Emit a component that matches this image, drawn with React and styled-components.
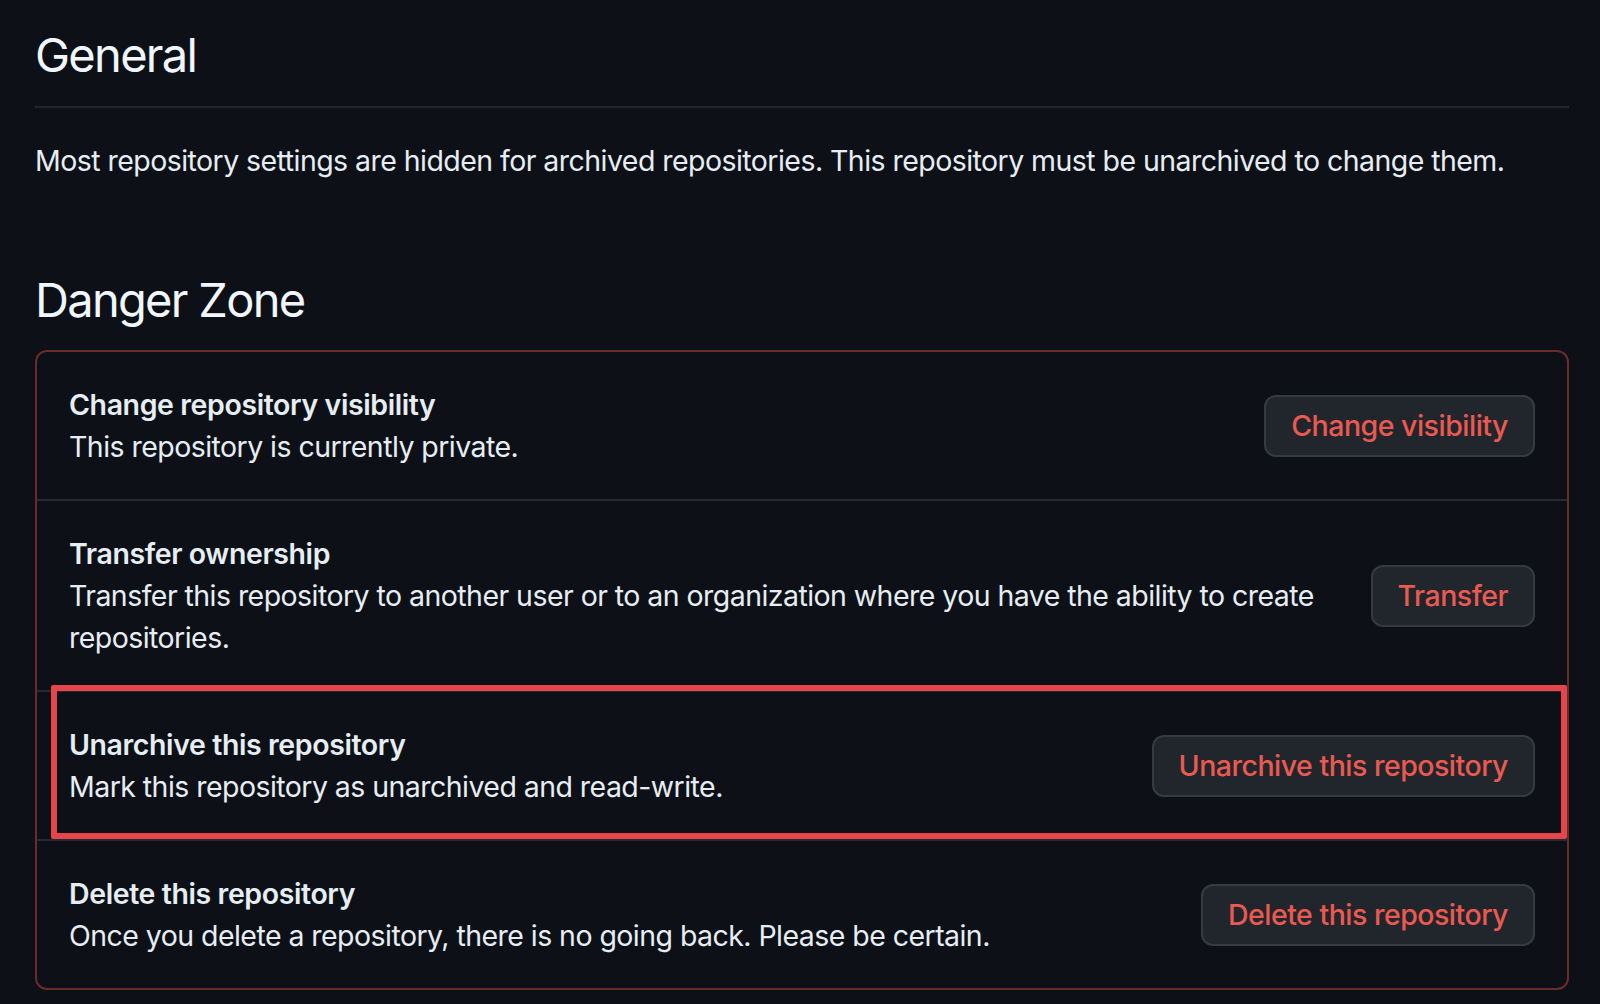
import React from "react";
import styled, { createGlobalStyle } from "styled-components";

const GlobalStyle = createGlobalStyle`
  html, body {
    margin: 0;
    padding: 0;
    background: #0d1117;
  }
  body {
    font-family: Inter, "Noto Sans", "Liberation Sans", sans-serif;
    color: #e6edf3;
    -webkit-font-smoothing: antialiased;
  }
`;

const rows = [
  {
    title: "Change repository visibility",
    text: "This repository is currently private.",
    button: "Change visibility",
  },
  {
    title: "Transfer ownership",
    text: "Transfer this repository to another user or to an organization where you have the ability to create repositories.",
    button: "Transfer",
  },
  {
    title: "Unarchive this repository",
    text: "Mark this repository as unarchived and read-write.",
    button: "Unarchive this repository",
    marked: true,
  },
  {
    title: "Delete this repository",
    text: "Once you delete a repository, there is no going back. Please be certain.",
    button: "Delete this repository",
  },
];

const App = () => {
  return (
    <Page>
      <GlobalStyle />
      <Subhead>General</Subhead>
      <Note>
        Most repository settings are hidden for archived repositories. This
        repository must be unarchived to change them.
      </Note>
      <DangerHeading>Danger Zone</DangerHeading>
      <DangerBox>
        {rows.map((row) => (
          <Row key={row.title}>
            {row.marked && <Highlight />}
            <RowText>
              <RowTitle>{row.title}</RowTitle>
              <RowDesc>{row.text}</RowDesc>
            </RowText>
            <DangerButton>{row.button}</DangerButton>
          </Row>
        ))}
      </DangerBox>
    </Page>
  );
};

export default App;

const Page = styled.div`
  min-height: 1004px;
  box-sizing: border-box;
  padding: 25px 31px 0 35px;
`;

const Subhead = styled.h2`
  margin: 0;
  font-size: 47px;
  font-weight: 400;
  letter-spacing: -1.7px;
  line-height: 60px;
  padding-bottom: 21px;
  border-bottom: 2px solid #21262d;
  color: #f0f6fc;
`;

const Note = styled.p`
  margin: 32px 0 0;
  font-size: 28.5px;
  letter-spacing: -0.55px;
  line-height: 42px;
`;

const DangerHeading = styled.h2`
  margin: 88px 0 0;
  font-size: 47px;
  font-weight: 400;
  letter-spacing: -1.7px;
  line-height: 60px;
  color: #f0f6fc;
`;

const DangerBox = styled.div`
  margin-top: 20px;
  border: 2px solid #6b2b2b;
  border-radius: 12px;
`;

const Row = styled.div`
  position: relative;
  display: flex;
  align-items: center;
  gap: 32px;
  padding: 31.5px 32px;
  border-top: 2px solid #262b32;

  &:first-child {
    border-top: none;
  }
`;

const Highlight = styled.div`
  position: absolute;
  top: -7px;
  left: 14px;
  right: 0;
  bottom: 0;
  border: 6px solid #e5454b;
  border-radius: 2px;
  pointer-events: none;
`;

const RowText = styled.div`
  flex: 1;
  min-width: 0;
`;

const RowTitle = styled.div`
  font-size: 28.5px;
  font-weight: 600;
  letter-spacing: -0.4px;
  line-height: 42px;
`;

const RowDesc = styled.div`
  font-size: 28.5px;
  letter-spacing: -0.55px;
  line-height: 42px;
`;

const DangerButton = styled.button`
  flex-shrink: 0;
  height: 62px;
  padding: 0 25px;
  border: 2px solid #363b42;
  border-radius: 12px;
  background: #21262d;
  color: #ea5a50;
  font-family: inherit;
  font-size: 28.5px;
  font-weight: 500;
  letter-spacing: -0.5px;
  cursor: pointer;
`;
